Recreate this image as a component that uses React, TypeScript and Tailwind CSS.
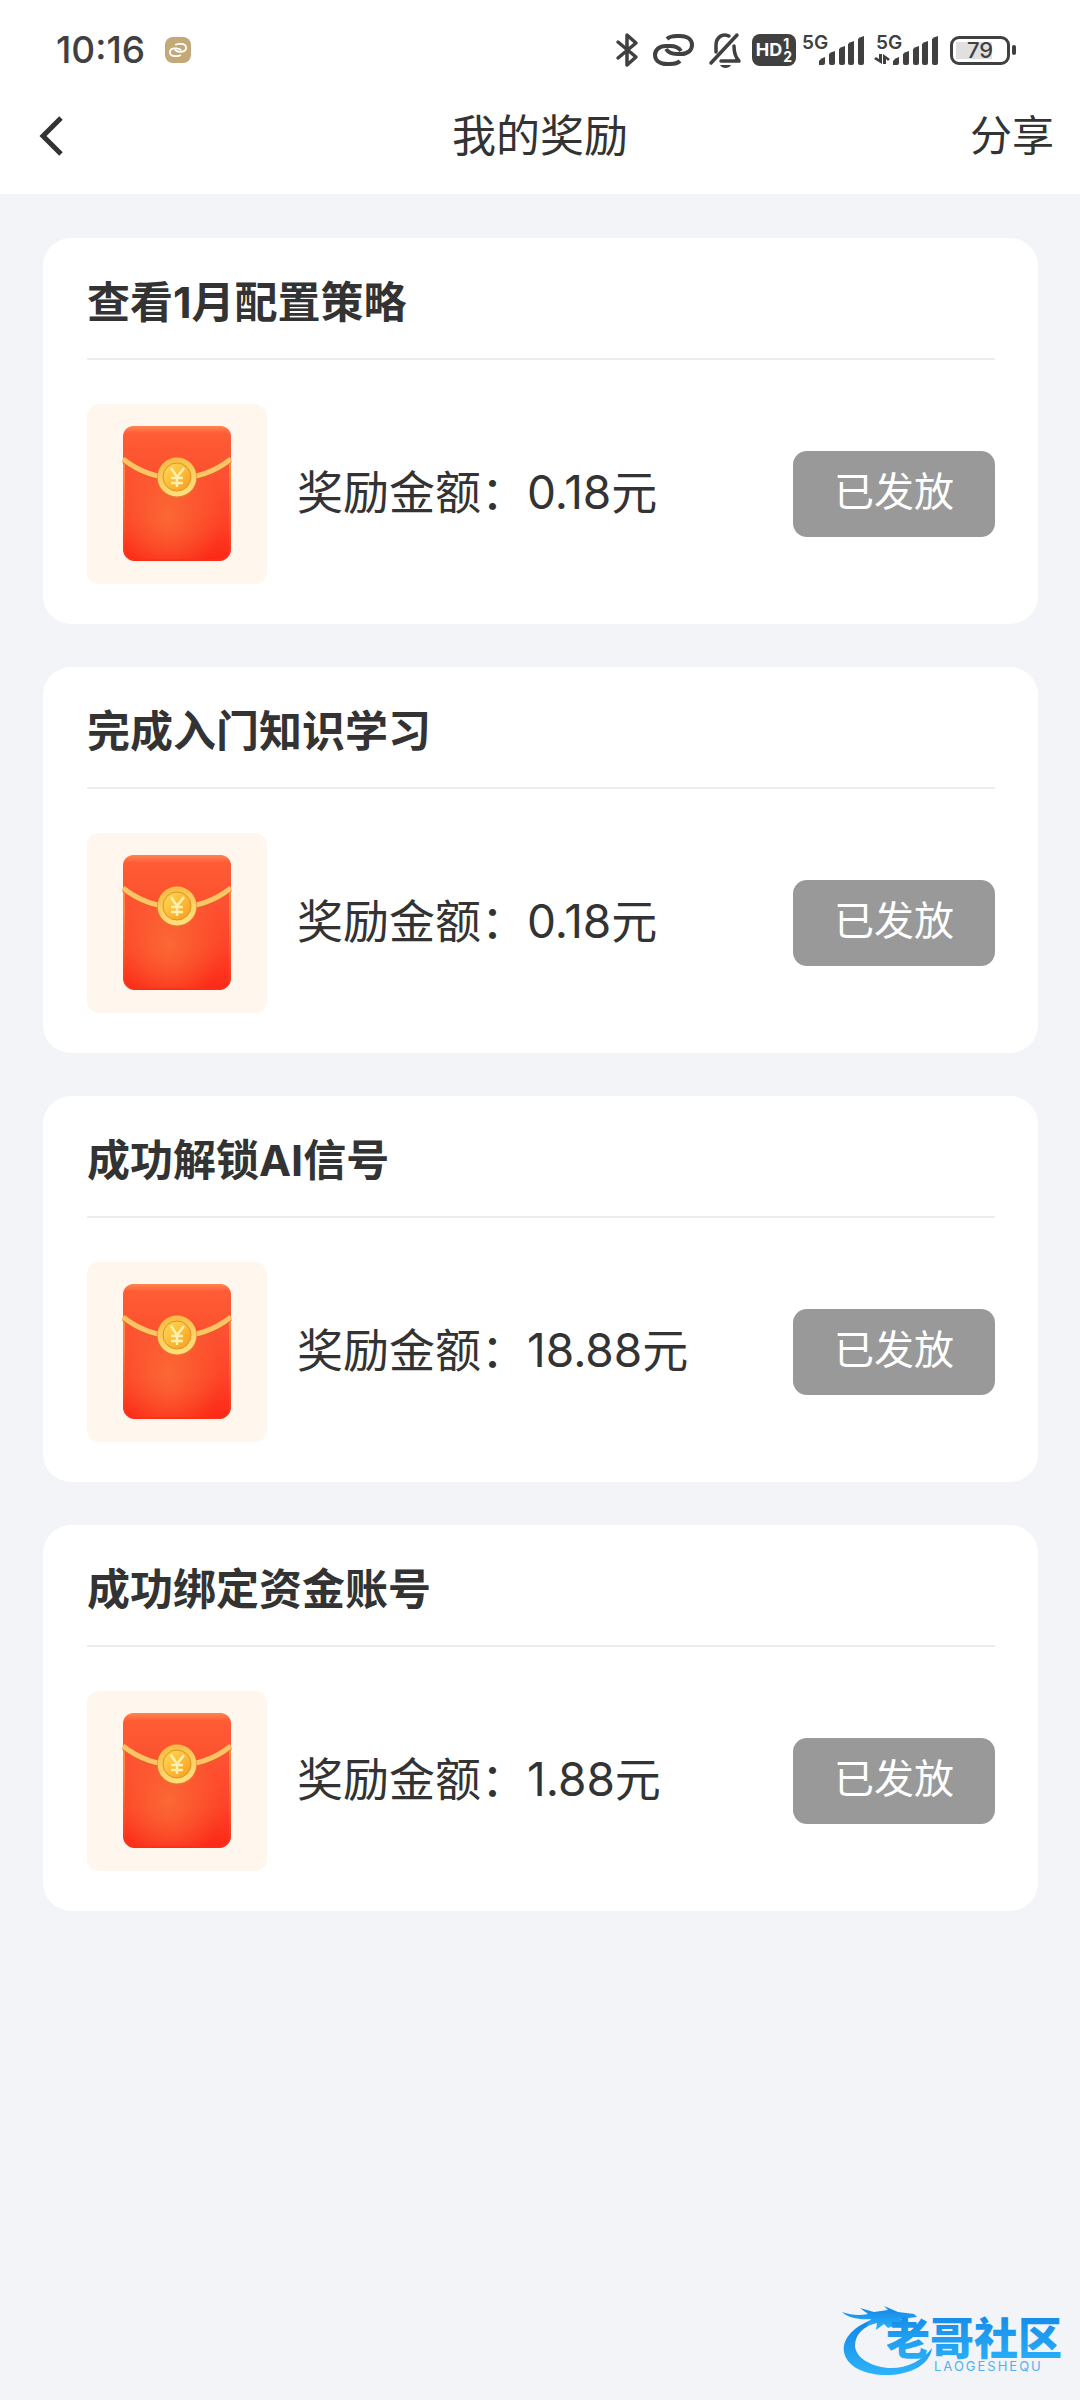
import { useId } from "react";

interface Reward {
  id: string;
  title: string;
  amount: string;
  status: string;
}

const rewards: Reward[] = [
  { id: "strategy", title: "查看1月配置策略", amount: "0.18元", status: "已发放" },
  { id: "study", title: "完成入门知识学习", amount: "0.18元", status: "已发放" },
  { id: "signal", title: "成功解锁AI信号", amount: "18.88元", status: "已发放" },
  { id: "account", title: "成功绑定资金账号", amount: "1.88元", status: "已发放" }
];

function LinkRings({ className }: { className?: string }) {
  return (
    <svg viewBox="0 0 41 32" className={className} fill="none" stroke="currentColor" strokeWidth="4" aria-hidden="true">
      <path d="M14 5 C17 2 20 2 24 2 H27 C35 2 39 6 39 11 C39 16 35 20 28 20 H24 C18 20 15 18 13 15" />
      <path d="M27 27 C24 30 21 30 17 30 H14 C6 30 2 26 2 21 C2 16 6 12 13 12 H17 C23 12 26 14 28 17" />
    </svg>
  );
}

function BluetoothIcon() {
  return (
    <svg viewBox="0 0 24 36" className="h-9 w-6" fill="none" stroke="currentColor" strokeWidth="3.5" strokeLinejoin="round" strokeLinecap="round" aria-hidden="true">
      <path d="M3 10 L21 25 L12 33 V3 L21 11 L3 26" />
    </svg>
  );
}

function MutedBell() {
  return (
    <svg viewBox="0 0 34 36" className="h-9 w-[34px]" fill="none" stroke="currentColor" strokeWidth="3.5" strokeLinejoin="round" strokeLinecap="round" aria-hidden="true">
      <path d="M3 31 L29 3" />
      <path d="M8 20 V13 C8 7 12 3 17 3 C19 3 20 4 21 4" />
      <path d="M26 14 C26 21 27 25 31 29 H13" />
      <path d="M12 33 H23 C21 37 14 37 12 33 Z" fill="currentColor" stroke="none" />
    </svg>
  );
}

function HdBadge() {
  return (
    <span className="flex h-8 w-11 items-center justify-center gap-px rounded-lg bg-[#404040] text-[18px] font-bold leading-none text-white">
      HD
      <span className="flex flex-col text-[14px] leading-[13px]">
        <span>1</span>
        <span>2</span>
      </span>
    </span>
  );
}

function SignalIcon({ data }: { data?: boolean }) {
  return (
    <svg viewBox="0 0 62 36" className="h-9 w-[62px] overflow-visible" fill="currentColor" aria-hidden="true">
      <text x="0" y="17" fontSize="19" fontWeight="600">
        5G
      </text>
      {data && <path d="M3 22 H6 V32 L-2 27 L0 25 L3 27 Z M7 32 V22 L14 27 L12 29 L10 27 V32 Z" />}
      <path d="M17 33 V29 Q19 26 23 25 V31 Q23 33 21 33 Z" />
      <path d="M27 31 V22 Q29 20 33 19 V31 Q33 33 31 33 H29 Q27 33 27 31 Z" />
      <path d="M37 31 V17 Q39 15 43 14 V31 Q43 33 41 33 H39 Q37 33 37 31 Z" />
      <path d="M46 31 V12 Q48 10 52 9 V31 Q52 33 50 33 H48 Q46 33 46 31 Z" />
      <path d="M56 31 V7 Q58 5 62 4 V31 Q62 33 60 33 H58 Q56 33 56 31 Z" />
    </svg>
  );
}

function BatteryIcon() {
  return (
    <div className="flex items-center gap-0.5">
      <div className="flex h-[29px] w-[60px] rounded-[9px] border-3 border-[#404040] p-[3px]">
        <div className="flex h-full w-full items-center justify-center bg-linear-to-r from-[#e0e0e0] from-75% to-transparent to-75% text-[22px] font-medium leading-none">
          79
        </div>
      </div>
      <div className="h-2.5 w-1 rounded-full bg-[#404040]" />
    </div>
  );
}

function StatusBar() {
  return (
    <div className="flex h-[98px] items-center justify-between pt-0.5 pr-16 pl-14 text-[#404040]">
      <div className="flex items-center gap-5">
        <span className="text-[37px] font-medium">10:16</span>
        <span className="flex size-[26px] items-center justify-center rounded-lg bg-[#c3a878] text-white">
          <LinkRings className="h-3.5 w-[18px]" />
        </span>
      </div>
      <div className="flex items-center">
        <BluetoothIcon />
        <LinkRings className="ml-3.5 h-8 w-[41px]" />
        <div className="ml-3.5">
          <MutedBell />
        </div>
        <div className="ml-2.5 flex items-center gap-1.5">
          <HdBadge />
          <SignalIcon />
        </div>
        <div className="ml-3 flex items-center gap-3">
          <SignalIcon data />
          <BatteryIcon />
        </div>
      </div>
    </div>
  );
}

function RedPacket() {
  const id = useId();

  return (
    <svg viewBox="0 0 180 180" className="size-full" aria-hidden="true">
      <defs>
        <linearGradient id={`${id}-base`} x1="0" y1="0" x2="0" y2="1">
          <stop offset="0" stopColor="#ff5a36" />
          <stop offset="0.4" stopColor="#fd5030" />
          <stop offset="0.7" stopColor="#fd4427" />
          <stop offset="1" stopColor="#fb2817" />
        </linearGradient>
        <radialGradient id={`${id}-glow`} cx="0.42" cy="0.66" r="0.5">
          <stop offset="0" stopColor="#fb6835" />
          <stop offset="1" stopColor="#fb6835" stopOpacity="0" />
        </radialGradient>
        <linearGradient id={`${id}-edge`} x1="0" y1="0" x2="0" y2="1">
          <stop offset="0" stopColor="#ff9a60" />
          <stop offset="0.4" stopColor="#fd9440" />
          <stop offset="1" stopColor="#fb3018" />
        </linearGradient>
        <linearGradient id={`${id}-flap`} x1="0" y1="0" x2="0" y2="1">
          <stop offset="0" stopColor="#ff8450" />
          <stop offset="0.15" stopColor="#ff5c36" />
          <stop offset="1" stopColor="#fc502d" />
        </linearGradient>
        <linearGradient id={`${id}-coin`} x1="0" y1="0" x2="1" y2="1">
          <stop offset="0" stopColor="#ffdc5a" />
          <stop offset="1" stopColor="#f99b18" />
        </linearGradient>
        <linearGradient id={`${id}-ring`} x1="0" y1="0" x2="0.3" y2="1">
          <stop offset="0" stopColor="#f8b63a" />
          <stop offset="1" stopColor="#ffdd7c" />
        </linearGradient>
      </defs>
      <rect x="36" y="22" width="108" height="135" rx="12" fill={`url(#${id}-base)`} />
      <rect x="37" y="23" width="106" height="133" rx="11" fill={`url(#${id}-glow)`} stroke={`url(#${id}-edge)`} strokeWidth="1.5" />
      <path d="M36 56 V34 Q36 22 48 22 H132 Q144 22 144 34 V56 Q120 74 90 74 Q60 74 36 56 Z" fill={`url(#${id}-flap)`} />
      <path d="M36 57 Q60 76 90 76 Q120 76 144 57" fill="none" stroke="#dc6224" strokeWidth="3" />
      <path d="M36 55 Q60 74 90 74 Q120 74 144 55" fill="none" stroke="#fdc465" strokeWidth="5" />
      <circle cx="90" cy="74" r="20" fill="#e8742a" />
      <circle cx="90" cy="73" r="19.5" fill={`url(#${id}-ring)`} />
      <circle cx="90" cy="73" r="14" fill={`url(#${id}-coin)`} stroke="#dd9424" strokeWidth="1" />
      <path d="M84 64 L90 73 L97 64 M90 73 V83 M84 74 H96 M84 79 H96" fill="none" stroke="#fff0b0" strokeWidth="2.5" />
    </svg>
  );
}

function RewardCard({ reward }: { reward: Reward }) {
  return (
    <li className="rounded-[28px] bg-white pr-[43px] pb-10 pl-11">
      <h2 className="border-b-2 border-[#ededed] pt-8 pb-6 text-[43px] font-bold leading-16">{reward.title}</h2>
      <div className="flex items-center pt-11">
        <div className="size-[180px] shrink-0 overflow-hidden rounded-xl bg-[#fff6ed]">
          <RedPacket />
        </div>
        <p className="ml-[30px] flex-1 pb-1 text-[46px] leading-16">奖励金额：{reward.amount}</p>
        <button type="button" className="h-[86px] w-[202px] shrink-0 rounded-[14px] bg-[#999999] pb-1 text-[40px] text-white">
          {reward.status}
        </button>
      </div>
    </li>
  );
}

function CommunityLogo() {
  const id = useId();

  return (
    <svg viewBox="0 0 226 80" className="h-20 w-[226px] overflow-visible" role="img" aria-label="老哥社区">
      <defs>
        <linearGradient id={id} x1="0" y1="0" x2="0" y2="1">
          <stop offset="0" stopColor="#1283e6" />
          <stop offset="1" stopColor="#2cb4fa" />
        </linearGradient>
      </defs>
      <g fill={`url(#${id})`}>
        <path d="M34 12 C12 20 0 32 2 46 C5 62 26 70 48 69 C70 68 88 58 90 42 C80 55 64 63 46 62 C28 60 14 52 13 40 C13 28 22 20 36 16 Z" />
        <path d="M0 6 C8 9 18 10 26 8 L18 2 L32 6 L46 4 L42 0 L56 6 L72 8 L68 4 L75 11 L58 13 L71 18 L56 18 L46 22 L42 18 L34 24 L35 17 L24 20 L29 13 C18 14 6 12 0 6 Z" />
      </g>
      <text x="44" y="49" fontSize="44" fontWeight="900" fill={`url(#${id})`} className="font-['Noto_Sans_CJK_SC',sans-serif]">
        老哥社区
      </text>
      <text x="92" y="65" fontSize="13" letterSpacing="2" fill="#51b2f2">
        LAOGESHEQU
      </text>
    </svg>
  );
}

export default function App() {
  return (
    <div className="flex min-h-screen flex-col bg-[#f2f4f8] font-['Inter','Noto_Sans_CJK_SC',sans-serif] text-[#333333]">
      <header className="bg-white">
        <StatusBar />
        <nav className="grid grid-cols-3 items-center px-[26px] pt-1.5 pb-[26px]">
          <button type="button" aria-label="返回" className="justify-self-start px-3 py-2.5">
            <svg viewBox="0 0 26 42" className="h-[42px] w-[26px]" fill="none" stroke="currentColor" strokeWidth="5" aria-hidden="true">
              <path d="M23 3 L5 21 L23 39" />
            </svg>
          </button>
          <h1 className="justify-self-center text-[44px] leading-16">我的奖励</h1>
          <button type="button" className="justify-self-end text-[42px] leading-16">
            分享
          </button>
        </nav>
      </header>

      <main className="flex-1 pt-11 pr-[42px] pl-[43px]">
        <ul className="flex flex-col gap-[43px]">
          {rewards.map(reward => (
            <RewardCard key={reward.id} reward={reward} />
          ))}
        </ul>
      </main>

      <footer className="flex justify-end pr-3 pb-[14px]">
        <CommunityLogo />
      </footer>
    </div>
  );
}
